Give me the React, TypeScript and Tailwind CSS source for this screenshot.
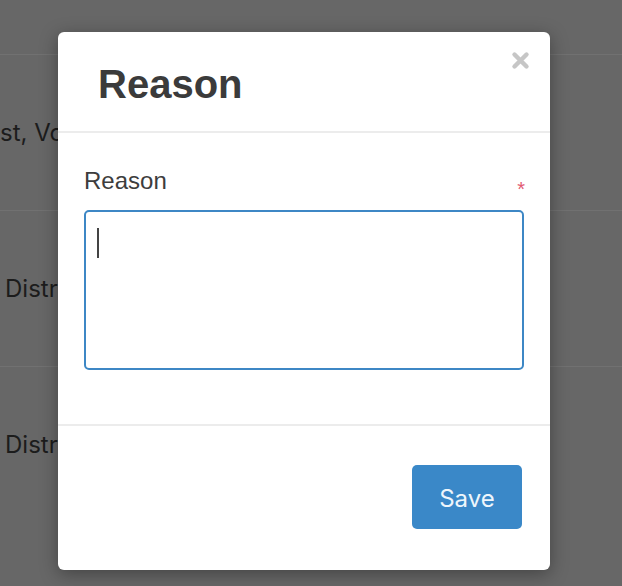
import { useState } from "react";

const rows = [
  { text: "st, Volunteer", pad: "pl-0", line: true },
  { text: "District", pad: "pl-[5px]", line: true },
  { text: "District", pad: "pl-[5px]", line: false },
];

function CloseIcon() {
  return (
    <svg width="19" height="19" viewBox="0 0 19 19" className="block">
      <path
        d="M3.5 3.5 L15.5 15.5 M15.5 3.5 L3.5 15.5"
        stroke="#c6c6c6"
        strokeWidth="4.4"
        strokeLinecap="round"
      />
    </svg>
  );
}

export default function App() {
  const [reason, setReason] = useState("");

  return (
    <div className="relative h-[586px] w-[622px] overflow-hidden bg-[#676767] font-['Inter',sans-serif]">
      {/* Page behind the overlay */}
      <div className="flex flex-col">
        <div className="h-[55px] border-b border-[#717171]" />
        {rows.map((row, i) => (
          <div
            key={i}
            className={`flex h-[156px] items-center ${row.line ? "border-b border-[#717171]" : ""} ${row.pad} text-[24px] text-[#1c1c1c] whitespace-nowrap`}
          >
            {row.text}
          </div>
        ))}
      </div>

      {/* Modal */}
      <div className="absolute left-[58px] top-[32px] flex h-[538px] w-[492px] flex-col rounded-[6px] bg-white shadow-[0_4px_18px_rgba(0,0,0,0.35)] font-['Liberation_Sans',Arial,sans-serif]">
        {/* Header */}
        <div className="relative flex h-[101px] shrink-0 items-center border-b-2 border-[#ececec] pl-[40px]">
          <h2 className="pt-[5px] text-[40px] font-bold leading-none text-[#3b3b3b]">
            Reason
          </h2>
          <button className="absolute right-[20px] top-[19px]">
            <CloseIcon />
          </button>
        </div>

        {/* Body */}
        <div className="flex h-[291px] shrink-0 flex-col px-[26px] pt-[33px]">
          <div className="flex h-[29px] items-start justify-between overflow-visible">
            <label className="text-[24px] leading-[29px] text-[#3d3d3d]">
              Reason
            </label>
            <span className="mr-[-1px] mt-[13px] text-[20px] leading-none text-[#e25a72]">
              *
            </span>
          </div>
          <div className="relative mt-[15px] h-[160px] w-full rounded-[5px] border-2 border-[#3d87c5] bg-white">
            <textarea
              value={reason}
              onChange={(e) => setReason(e.target.value)}
              className="absolute inset-0 h-full w-full resize-none bg-transparent px-[12px] pt-[14px] text-[20px] outline-none caret-transparent"
            />
            <span className="pointer-events-none absolute left-[11px] top-[16px] h-[30px] w-[2px] bg-[#444]" />
          </div>
        </div>

        {/* Footer */}
        <div className="flex flex-1 items-start justify-end border-t-2 border-[#ececec] pr-[28px] pt-[39px]">
          <button className="flex h-[64px] w-[110px] items-center justify-center rounded-[5px] bg-[#3a88c8] pt-[3px] font-['Inter',sans-serif] text-[24px] text-[#eef6fc]">
            Save
          </button>
        </div>
      </div>
    </div>
  );
}
